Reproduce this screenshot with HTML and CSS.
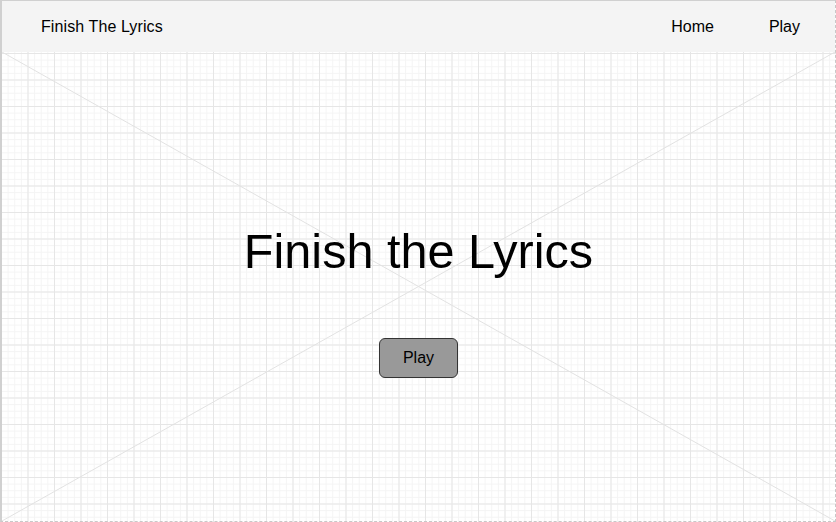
FILE: index.html
```html
<!DOCTYPE html>
<html>
<head>
<meta charset="utf-8">
<link rel="stylesheet" href="styles.css">
</head>
<body>
<div class="frame">
  <header class="topbar">
    <div class="brand">Finish The Lyrics</div>
    <nav class="nav">
      <a class="nav-link">Home</a>
      <a class="nav-link">Play</a>
    </nav>
  </header>
  <main class="stage">
    <svg class="placeholder" viewBox="0 0 100 100" preserveAspectRatio="none">
      <line x1="0" y1="0" x2="100" y2="100" vector-effect="non-scaling-stroke"/>
      <line x1="100" y1="0" x2="0" y2="100" vector-effect="non-scaling-stroke"/>
    </svg>
    <h1 class="title">Finish the Lyrics</h1>
    <button class="play-btn">Play</button>
  </main>
</div>
</body>
</html>
```
FILE: styles.css
```css
* { box-sizing: border-box; }
html, body { margin: 0; padding: 0; background: #fff; }
body { font-family: "Liberation Sans", Arial, sans-serif; color: #000; }

.frame {
  width: 836px;
  height: 522px;
  display: flex;
  flex-direction: column;
  border-left: 2px solid #d0d0d0;
  border-top: 1px solid #d0d0d0;
  border-right: 1px dashed #c8c8c8;
  border-bottom: 1px dashed #c8c8c8;
  background-color: #fff;
  background-image:
    linear-gradient(to right, #e6e6e6 1px, transparent 1px),
    linear-gradient(to bottom, #e6e6e6 1px, transparent 1px),
    linear-gradient(to right, #f4f4f4 1px, transparent 1px),
    linear-gradient(to bottom, #f4f4f4 1px, transparent 1px);
  background-size: 26.5px 26.5px, 26.5px 26.5px, 6.625px 6.625px, 6.625px 6.625px;
  background-position: -1px -1px;
}

.topbar {
  height: 51px;
  flex: none;
  background: #f4f4f4;
  display: flex;
  align-items: center;
  justify-content: space-between;
  padding: 0 35px 0 39px;
  font-size: 16px;
}

.brand { letter-spacing: 0.1px; }
.nav { display: flex; gap: 55px; }
.nav-link { color: #000; }

.stage {
  position: relative;
  flex: 1;
  display: flex;
  flex-direction: column;
  align-items: center;
  padding-top: 171px;
}

.placeholder {
  position: absolute;
  inset: 0;
  width: 100%;
  height: 100%;
}
.placeholder line { stroke: #e2e2e2; stroke-width: 1; }

.title {
  position: relative;
  margin: 0;
  font-weight: normal;
  font-size: 48.6px;
  line-height: 56px;
}

.play-btn {
  position: relative;
  margin-top: 59px;
  width: 79px;
  height: 40px;
  background: #999;
  border: 1px solid #333;
  border-radius: 6px;
  font-family: inherit;
  font-size: 16px;
  color: #000;
  padding: 0;
}
```
